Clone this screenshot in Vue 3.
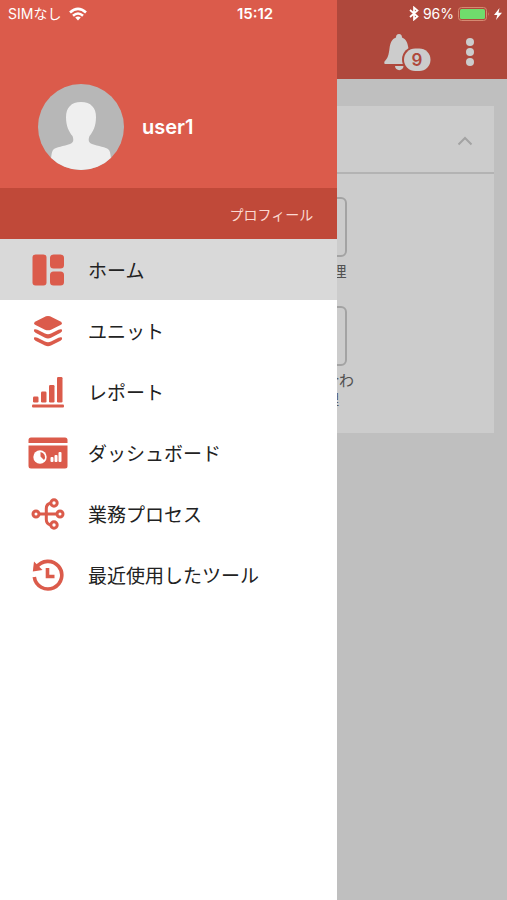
<template>
  <div class="app">
    <main class="page">
      <header class="page-header">
        <button class="icon-button bell" type="button" aria-label="通知">
          <svg width="48" height="38" viewBox="0 0 48 38" fill="#fff">
            <path d="M16 0C13.900 0 13 1.500 13 3.400C8.700 4.900 7.200 9 6.500 14.500C5.700 21 4.800 24.500 1.500 27.500Q0.600 29.500 2 30H30V27C26.500 24 26 18 25.300 13.500C24.500 8.500 23 4.800 19 3.400C19 1.500 18.100 0 16 0Z" />
            <path d="M12 32H20.500C20.500 37.500 12 37.500 12 32Z" />
            <rect x="19" y="12.500" width="30" height="26" rx="13" class="badge-gap" />
            <rect x="21" y="14.500" width="26.500" height="22.500" rx="11.200" />
          </svg>
          <span class="badge">9</span>
        </button>
        <button class="icon-button more" type="button" aria-label="メニュー">
          <svg width="10" height="30" viewBox="0 0 10 30" fill="#fff">
            <circle cx="5" cy="4" r="4" />
            <circle cx="5" cy="14" r="4" />
            <circle cx="5" cy="24" r="4" />
          </svg>
        </button>
      </header>

      <section class="card">
        <button class="card-header" type="button" aria-label="折りたたむ">
          <svg width="16" height="10" viewBox="0 0 16 10" fill="none" stroke="#ccc" stroke-width="2">
            <path d="M1.500 8.500L8 2L14.500 8.500" />
          </svg>
        </button>
        <div class="tiles">
          <div v-for="tile in tiles" :key="tile" class="tile">
            <div class="tile-icon"></div>
            <span class="tile-label">{{ tile }}</span>
          </div>
        </div>
      </section>
    </main>

    <div class="backdrop"></div>

    <aside class="drawer">
      <div class="account">
        <svg class="avatar" width="86" height="86" viewBox="0 0 86 86">
          <defs>
            <clipPath id="avatar-clip"><circle cx="43" cy="43" r="43" /></clipPath>
          </defs>
          <circle cx="43" cy="43" r="43" fill="#b7b7b7" />
          <path
            clip-path="url(#avatar-clip)"
            fill="#efefef"
            d="M43 18C33 18 28 24 28 33C28 42 31 48 34.500 52C36 56 35.500 58.500 32 60C26 62.500 18 62.500 15 66C13 69 13 76 12 88H74C73 76 73 69 71 66C68 62.500 60 62.500 54 60C50.500 58.500 50 56 51.500 52C55 48 58 42 58 33C58 24 53 18 43 18Z"
          />
        </svg>
        <span class="user-name">user1</span>
      </div>
      <div class="profile-bar">
        <a class="profile-link" href="#">プロフィール</a>
      </div>
      <nav class="menu">
        <a
          v-for="item in items"
          :key="item.icon"
          href="#"
          class="menu-item"
          :class="{ active: item.icon === current }"
          @click.prevent="current = item.icon"
        >
          <svg class="menu-icon" width="40" height="34" viewBox="0 0 40 34" fill="#db5b4b">
            <template v-if="item.icon === 'home'">
              <rect x="4.500" y="1.500" width="14" height="31" rx="3" />
              <rect x="22" y="1.500" width="14" height="14" rx="3.500" />
              <rect x="22" y="18.500" width="14" height="14" rx="3.500" />
            </template>
            <template v-else-if="item.icon === 'unit'">
              <path d="M18 2.300Q20 1.500 22 2.300L32.500 7.500Q35.500 9.300 32.500 11L23 15.700Q20 17 17 15.700L7.500 11Q4.500 9.300 7.500 7.500Z" />
              <path d="M6 15.500Q7.500 14.700 9.500 15.700L17 19.500Q20 20.900 23 19.500L30.500 15.700Q32.500 14.700 34 15.500Q34.800 17.200 32.500 18.800L23 23.800Q20 25.200 17 23.800L7.500 18.800Q5.200 17.200 6 15.500Z" />
              <path d="M6 23.500Q7.500 22.700 9.500 23.700L17 27.500Q20 28.900 23 27.500L30.500 23.700Q32.500 22.700 34 23.500Q34.800 25.200 32.500 26.800L23 31.600Q20 33 17 31.600L7.500 26.800Q5.200 25.200 6 23.500Z" />
            </template>
            <template v-else-if="item.icon === 'report'">
              <rect x="5" y="21.500" width="5.500" height="6" rx="1.200" />
              <rect x="13" y="16.500" width="5.500" height="11" rx="1.200" />
              <rect x="21" y="10" width="5.500" height="17.500" rx="1.200" />
              <rect x="29" y="2" width="5.500" height="25.500" rx="1.200" />
              <rect x="4" y="29.500" width="32" height="3" rx="1" />
            </template>
            <template v-else-if="item.icon === 'dashboard'">
              <path d="M0.500 7V4Q0.500 1.500 3 1.500H37Q39.500 1.500 39.500 4V7Z" />
              <path d="M0.500 9.500H39.500V30Q39.500 32.500 37 32.500H3Q0.500 32.500 0.500 30Z" />
              <circle cx="12" cy="21" r="6.700" fill="#fff" />
              <path d="M12.500 20.500V16A5 5 0 0 1 16 24Z" />
              <rect x="22.500" y="21" width="3" height="5" rx="1" fill="#fff" />
              <rect x="26.500" y="19" width="3" height="7" rx="1" fill="#fff" />
              <rect x="30.500" y="16" width="3" height="10" rx="1" fill="#fff" />
            </template>
            <g v-else-if="item.icon === 'process'" fill="none" stroke="#db5b4b" stroke-width="3">
              <circle cx="8" cy="17" r="3" />
              <circle cx="32" cy="17" r="3" />
              <circle cx="26" cy="6" r="3.200" />
              <circle cx="26" cy="28" r="3.200" />
              <path d="M11 17H29M22.800 6Q18.300 7 18.300 11.500V22.500Q18.300 27 22.800 28" />
            </g>
            <template v-else>
              <path
                d="M8.500 9.500A13.800 13.800 0 1 1 6.300 19"
                fill="none"
                stroke="#db5b4b"
                stroke-width="3.600"
              />
              <path d="M6 3.500L4.800 13.500L14.500 12Z" />
              <path d="M19.500 10V18.500H26.500" fill="none" stroke="#db5b4b" stroke-width="3.600" />
            </template>
          </svg>
          <span>{{ item.label }}</span>
        </a>
      </nav>
    </aside>

    <div class="status-bar">
      <div class="status-side">
        <span>SIMなし</span>
        <svg width="18" height="14" viewBox="0 0 18 14" fill="none" stroke="#fff" stroke-width="2.600">
          <path d="M1 5.500Q9 -1.800 17 5.500" />
          <path d="M4 8.700Q9 4.300 14 8.700" />
          <path d="M6.200 10.500Q9 8.300 11.800 10.500L9 13.500Z" fill="#fff" stroke="none" />
        </svg>
      </div>
      <span class="status-time">15:12</span>
      <div class="status-side end">
        <svg width="10" height="15" viewBox="0 0 10 15" fill="none" stroke="#fff" stroke-width="1.700">
          <path d="M1 4L8.500 10.500L5 13.500V1.500L8.500 4.500L1 11" />
        </svg>
        <span class="percent">96%</span>
        <svg width="32" height="14" viewBox="0 0 32 14">
          <rect x="0.500" y="0.500" width="28" height="13" rx="3" fill="none" stroke="#d58a72" />
          <rect x="2" y="2" width="25" height="10" rx="1.500" fill="#70dc6c" />
          <path d="M30 5Q31.500 7 30 9Z" fill="#d58a72" />
        </svg>
        <svg width="8" height="12" viewBox="0 0 8 12" fill="#fff">
          <path d="M5.500 0L0 7H3.300L2 12L8 4.800H4.500Z" />
        </svg>
      </div>
    </div>
  </div>
</template>

<script setup>
import { ref } from 'vue'

const current = ref('home')

const items = [
  { icon: 'home', label: 'ホーム' },
  { icon: 'unit', label: 'ユニット' },
  { icon: 'report', label: 'レポート' },
  { icon: 'dashboard', label: 'ダッシュボード' },
  { icon: 'process', label: '業務プロセス' },
  { icon: 'recent', label: '最近使用したツール' }
]

const tiles = ['顧客管理', 'お問い合わせ管理']
</script>

<style>
body {
  margin: 0;
}
</style>

<style scoped>
.app {
  position: relative;
  min-height: 100vh;
  overflow: hidden;
  background-color: #efefef;
  font-family: Inter, 'Noto Sans CJK JP', sans-serif;
  color: #222;
}

button {
  padding: 0;
  border: none;
  background: none;
  font: inherit;
}

svg {
  display: block;
  flex-shrink: 0;
}

.page-header {
  display: flex;
  justify-content: flex-end;
  align-items: center;
  gap: 34px;
  box-sizing: border-box;
  height: 79px;
  padding: 27px 32px 0 0;
  background-color: #db5b4b;
}

.bell {
  position: relative;
}

.badge-gap {
  fill: #db5b4b;
}

.badge {
  position: absolute;
  top: 15px;
  left: 21px;
  width: 26px;
  line-height: 22px;
  text-align: center;
  font-size: 17px;
  font-weight: 600;
  color: #db5b4b;
}

.card {
  margin: 27px 13px 0;
  background-color: #fff;
}

.card-header {
  display: flex;
  justify-content: flex-end;
  align-items: center;
  box-sizing: border-box;
  width: 100%;
  height: 68px;
  padding: 3px 21px 0 0;
  border-bottom: 2px solid #e0e0e0;
}

.tiles {
  display: grid;
  grid-template-columns: repeat(4, 1fr);
  row-gap: 25px;
  padding: 23px 0 24px 8px;
}

.tile {
  grid-column: 3;
  display: flex;
  flex-direction: column;
  align-items: center;
  gap: 5px;
}

.tile-icon {
  box-sizing: border-box;
  width: 60px;
  height: 60px;
  border: 2px solid #ccc;
  border-radius: 6px;
}

.tile-label {
  max-width: 80px;
  font-size: 15px;
  line-height: 19px;
  text-align: center;
  color: #666;
}

.backdrop {
  position: absolute;
  inset: 0;
  background-color: rgba(0, 0, 0, 0.2);
}

.drawer {
  position: absolute;
  top: 0;
  bottom: 0;
  left: 0;
  width: 66.5%;
  background-color: #fff;
}

.account {
  display: flex;
  align-items: center;
  gap: 18px;
  box-sizing: border-box;
  height: 188px;
  padding: 66px 0 0 38px;
  background-color: #db5b4b;
}

.user-name {
  font-size: 20px;
  font-weight: 600;
  color: #fff;
}

.profile-bar {
  display: flex;
  justify-content: flex-end;
  align-items: center;
  height: 51px;
  padding-right: 24px;
  background-color: #c04939;
}

.profile-link {
  font-size: 14px;
  color: #fbd9d2;
  text-decoration: none;
}

.menu-item {
  display: flex;
  align-items: center;
  gap: 20px;
  height: 61px;
  padding-left: 28px;
  font-size: 19px;
  color: #222;
  text-decoration: none;
}

.menu-item.active {
  background-color: #d9d9d9;
}

.status-bar {
  position: absolute;
  top: 0;
  left: 0;
  right: 0;
  display: flex;
  align-items: center;
  height: 27px;
  padding: 0 5px 0 8px;
  font-size: 14px;
  line-height: 20px;
  color: #fff;
}

.status-side {
  flex: 1;
  display: flex;
  align-items: center;
  gap: 8px;
}

.status-side.end {
  justify-content: flex-end;
  gap: 4px;
}

.status-time {
  font-size: 15px;
  font-weight: 600;
}
</style>
